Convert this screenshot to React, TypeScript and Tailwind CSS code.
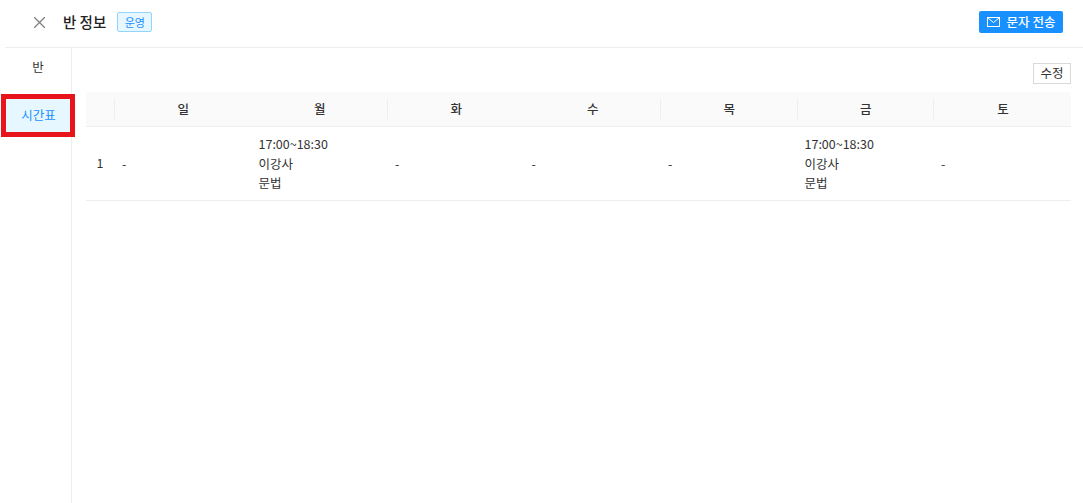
const days = [
  { name: "일", line: true },
  { name: "월", line: false },
  { name: "화", line: true },
  { name: "수", line: false },
  { name: "목", line: true },
  { name: "금", line: true },
  { name: "토", line: true },
];

const cells = [
  null,
  ["17:00~18:30", "이강사", "문법"],
  null,
  null,
  null,
  ["17:00~18:30", "이강사", "문법"],
  null,
];

export default function App() {
  return (
    <div className="h-[503px] w-[1083px] overflow-hidden bg-white font-['Noto_Sans_CJK_KR',sans-serif] text-[12.5px] text-[#333]">
      <header className="ml-[5px] flex h-[48px] items-center border-b border-[#eeeeee] pb-[3px] pl-[29px] pr-[20px]">
        <svg width="11" height="11" viewBox="0 0 11 11" fill="none" stroke="#808080" strokeWidth="1.3">
          <path d="M0 0l11 11M11 0L0 11" />
        </svg>
        <h1 className="ml-[18px] text-[14.5px] font-medium text-[#222]">반 정보</h1>
        <span className="ml-[11px] flex h-[20px] w-[35px] items-center justify-center rounded-[2px] border border-[#91d5ff] bg-[#e6f7ff] text-[11px] text-[#1890ff]">
          운영
        </span>
        <button className="ml-auto flex h-[22px] w-[84px] items-center justify-center gap-[7px] rounded-[2px] bg-[#1890ff] text-[12.5px] font-medium text-white">
          <svg width="13" height="10" viewBox="0 0 13 10" fill="none" stroke="white" strokeWidth="1">
            <rect x="0.5" y="0.5" width="12" height="9" />
            <path d="M1 1l5.500 4.500L12 1" />
          </svg>
          문자 전송
        </button>
      </header>

      <div className="flex h-[455px]">
        <aside className="w-[72px] shrink-0 border-r border-[#eeeeee] pl-[5px] pt-[7px]">
          <div className="flex h-[24px] items-center justify-center text-[#333]">반</div>
          <div className="mt-[19px] flex h-[35px] items-center justify-center bg-[#e6f7ff] pb-[1px] pl-[1px] text-[#1890ff] outline-[5px] -outline-offset-1 outline-[#e8141c]">
            시간표
          </div>
        </aside>

        <main className="flex-1 pl-[14px] pr-[12px] pt-[15px]">
          <div className="flex justify-end">
            <button className="h-[21px] w-[38px] border border-[#d9d9d9] bg-white text-[12.5px] text-[#333]">수정</button>
          </div>
          <div className="mt-[8px] grid grid-cols-[28px_repeat(6,136.5px)_1fr]">
            <div className="flex h-[35px] items-center border-b border-[#eeeeee] bg-[#fafafa]" />
            {days.map((day) => (
              <div key={day.name} className="relative flex h-[35px] items-center justify-center border-b border-[#eeeeee] bg-[#fafafa] pl-[2px] font-medium text-[#333]">
                {day.line && <span className="absolute left-0 top-[7px] h-[20px] w-px bg-[#eeeeee]" />}
                {day.name}
              </div>
            ))}
            <div className="flex h-[74px] items-center justify-center border-b border-[#eeeeee]">1</div>
            {cells.map((cell, i) => (
              <div key={i} className="flex h-[74px] flex-col justify-center border-b border-[#eeeeee] pl-[8px] leading-[19.5px]">
                {cell ? cell.map((line) => <div key={line}>{line}</div>) : <div>-</div>}
              </div>
            ))}
          </div>
        </main>
      </div>
    </div>
  );
}
